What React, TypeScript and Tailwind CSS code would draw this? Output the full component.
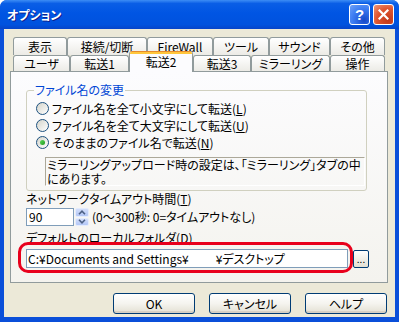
import React from "react";

const row1 = [
  { label: "表示", w: 54 },
  { label: "接続/切断", w: 80 },
  { label: "FireWall", w: 66 },
  { label: "ツール", w: 56 },
  { label: "サウンド", w: 61 },
  { label: "その他", w: 55 },
];

const row2 = [
  { label: "ユーザ", w: 57 },
  { label: "転送1", w: 59 },
  { label: "転送2", w: 64, active: true },
  { label: "転送3", w: 58 },
  { label: "ミラーリング", w: 79 },
  { label: "操作", w: 55 },
];

function Radio({ checked }: { checked?: boolean }) {
  return (
    <span className="flex items-center justify-center w-[13px] h-[13px] shrink-0 rounded-full border border-[#1C5180] bg-gradient-to-br from-[#D4D4CB] to-white">
      {checked && (
        <span className="w-[5px] h-[5px] rounded-full bg-gradient-to-br from-[#5BD95B] to-[#1E9A1E]" />
      )}
    </span>
  );
}

function XpButton({ label, w }: { label: string; w: number }) {
  return (
    <button
      style={{ width: w }}
      className="h-[21px] rounded-[3px] border border-[#003C74] bg-gradient-to-b from-white via-[#F5F4EF] to-[#E3E0D3] shadow-[inset_0_-2px_0_#D6D0C5] text-[12px] leading-none text-black"
    >
      {label}
    </button>
  );
}

function Arrow({ up }: { up?: boolean }) {
  return (
    <svg width="8" height="5" viewBox="0 0 8 5">
      <path
        d={up ? "M1 4.2 L4 1.2 L7 4.2" : "M1 0.8 L4 3.8 L7 0.8"}
        fill="none"
        stroke="#4D6185"
        strokeWidth="1.6"
      />
    </svg>
  );
}

export default function App() {
  return (
    <div className="w-[399px] h-[322px] flex flex-col rounded-t-[7px] overflow-hidden bg-[#0A4FD9] font-['Noto_Sans_CJK_JP','Noto_Sans',sans-serif] [font-feature-settings:'palt'] text-black">
      {/* Title bar */}
      <div className="h-[29px] shrink-0 flex items-center pl-[7px] pr-[5px] bg-[linear-gradient(180deg,#3D8DF5_0%,#0A5EE6_12%,#0055E3_45%,#0052DE_85%,#0644C9_100%)]">
        <span className="text-white font-bold text-[12px] leading-none [text-shadow:1px_1px_0_#0F1F8C]">
          オプション
        </span>
        <div className="ml-auto flex gap-[3px]">
          <div className="w-[21px] h-[21px] rounded-[3px] border border-white flex items-center justify-center bg-[radial-gradient(circle_at_75%_80%,#1648C8_0%,#3B7CF2_55%,#6FA2F8_100%)]">
            <span className="text-white font-bold text-[15px] leading-none font-['Liberation_Sans',sans-serif]">?</span>
          </div>
          <div className="w-[21px] h-[21px] rounded-[3px] border border-white flex items-center justify-center bg-[radial-gradient(circle_at_75%_80%,#C2381A_0%,#E0552F_55%,#EE9A7D_100%)]">
            <svg width="11" height="11" viewBox="0 0 11 11">
              <path d="M1.5 1.5 L9.5 9.5 M9.5 1.5 L1.5 9.5" stroke="white" strokeWidth="2.2" strokeLinecap="square" />
            </svg>
          </div>
        </div>
      </div>

      {/* Client area */}
      <div className="flex-1 mx-[4px] mb-[5px] bg-[#ECE9D8] pl-[6px] pt-[8px]">
        {/* Tabs */}
        <div className="flex ml-[3px] h-[18px]">
          {row1.map((t) => (
            <div
              key={t.label}
              style={{ width: t.w }}
              className="h-[18px] flex items-center justify-center border border-b-0 border-[#919B9C] rounded-t-[3px] bg-gradient-to-b from-white to-[#ECEBE6] text-[12px] leading-none"
            >
              {t.label}
            </div>
          ))}
        </div>
        <div className="flex items-end ml-[3px] h-[16px]">
          {row2.map((t) =>
            t.active ? (
              <div
                key={t.label}
                style={{ width: t.w }}
                className="relative z-10 h-[21px] mb-[-1px] flex flex-col border-x border-[#919B9C] rounded-t-[3px] bg-[#FCFCFE] overflow-hidden"
              >
                <div className="h-[1px] bg-[#E68B2C]" />
                <div className="h-[2px] bg-[#FFC73C]" />
                <div className="flex-1 flex items-center justify-center text-[12px] leading-none pb-[2px]">
                  {t.label}
                </div>
              </div>
            ) : (
              <div
                key={t.label}
                style={{ width: t.w }}
                className="h-[16px] flex items-center justify-center border border-b-0 border-[#919B9C] rounded-t-[3px] bg-gradient-to-b from-white to-[#ECEBE6] text-[12px] leading-none"
              >
                {t.label}
              </div>
            )
          )}
        </div>

        {/* Panel */}
        <div className="relative w-[378px] h-[212px] border border-[#919B9C] bg-gradient-to-b from-[#FCFCFE] to-[#F4F3EE] pl-[15px] flex flex-col text-[12px]">
          <fieldset className="mt-[11px] w-[341px] border border-[#D0D0BF] rounded-[3px] pb-[4px]">
            <legend className="ml-[7px] px-[1px] text-[#0046D5] leading-[14px]">ファイル名の変更</legend>
            <div className="pl-[9px] pt-[3px] flex flex-col">
              <div className="h-[17px] flex items-center gap-[3px]">
                <Radio />
                <span className="leading-none">ファイル名を全て小文字にして転送(<u>L</u>)</span>
              </div>
              <div className="h-[17px] flex items-center gap-[3px]">
                <Radio />
                <span className="leading-none">ファイル名を全て大文字にして転送(<u>U</u>)</span>
              </div>
              <div className="h-[17px] flex items-center gap-[3px]">
                <Radio checked />
                <span className="leading-none">そのままのファイル名で転送(<u>N</u>)</span>
              </div>
              <div className="mt-[6px] ml-[9px] w-[320px] h-[29px] border border-t-[#ACA899] border-l-[#ACA899] border-r-white border-b-white pl-[1px] leading-[14px]">
                <div>ミラーリングアップロード時の設定は、「ミラーリング」タブの中</div>
                <div>にあります。</div>
              </div>
            </div>
          </fieldset>

          <div className="mt-[1px] leading-[14px]">
            ネットワークタイムアウト時間(<u>T</u>)
          </div>
          <div className="mt-[2px] h-[18px] flex items-center">
            <div className="w-[48px] h-[18px] border border-[#7F9DB9] bg-white flex items-center pl-[2px] leading-none">
              90
            </div>
            <div className="ml-[1px] w-[14px] h-[18px] flex flex-col gap-[1px]">
              <div className="flex-1 rounded-[2px] border border-[#E4ECFD] bg-gradient-to-b from-[#D2DEFB] to-[#B3C7F6] flex items-center justify-center">
                <Arrow up />
              </div>
              <div className="flex-1 rounded-[2px] border border-[#E4ECFD] bg-gradient-to-b from-[#D2DEFB] to-[#B3C7F6] flex items-center justify-center">
                <Arrow />
              </div>
            </div>
            <span className="ml-[3px] leading-none">(0〜300秒: 0=タイムアウトなし)</span>
          </div>

          <div className="mt-[5px] leading-[14px]">
            デフォルトのローカルフォルダ(<u>D</u>)
          </div>
          <div className="mt-[4px] flex items-center">
            <div className="w-[322px] h-[19px] border border-[#7F9DB9] bg-white flex items-center pl-[1px] leading-none whitespace-nowrap">
              <span>C:¥Documents and Settings¥</span>
              <span className="w-[27px]" />
              <span>¥デスクトップ</span>
            </div>
            <button className="ml-[5px] w-[16px] h-[18px] rounded-[2px] border border-[#003C74] bg-gradient-to-b from-white to-[#E3E0D3] text-[10px] leading-none flex items-end justify-center pb-[3px]">
              ...
            </button>
          </div>

          {/* red annotation */}
          <div className="absolute left-[7px] top-[170px] w-[335px] h-[31px] border-[3px] border-[#E8001C] rounded-[10px] pointer-events-none" />
        </div>

        {/* Buttons */}
        <div className="mt-[10px] ml-[103px] flex gap-[14px]">
          <XpButton label="OK" w={82} />
          <XpButton label="キャンセル" w={82} />
          <XpButton label="ヘルプ" w={82} />
        </div>
      </div>
    </div>
  );
}
